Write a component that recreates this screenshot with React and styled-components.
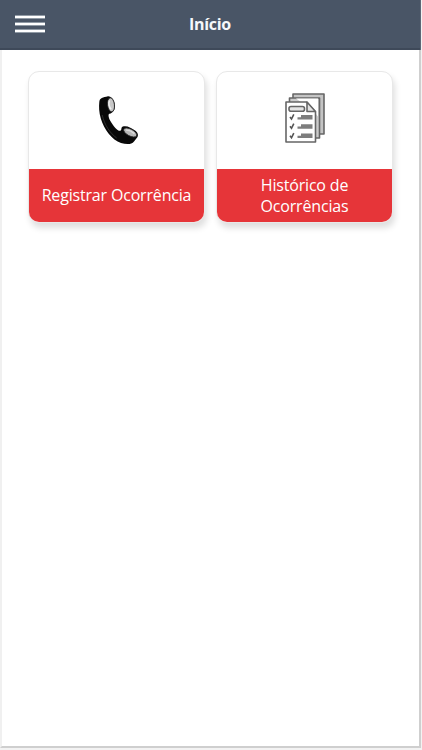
import React from 'react';
import styled, { createGlobalStyle } from 'styled-components';

const GlobalStyle = createGlobalStyle`
  * { box-sizing: border-box; }
  body {
    margin: 0;
    background: #f3f3f3;
    font-family: "Open Sans", "Noto Sans", sans-serif;
    overflow: hidden;
  }
`;

const Screen = styled.div`
  display: flex;
  flex-direction: column;
  width: 421px;
  height: 748px;
`;

const Header = styled.header`
  display: grid;
  grid-template-columns: 60px 1fr 60px;
  align-items: center;
  flex: none;
  height: 50px;
  padding-bottom: 1px;
  background: #495566;
  border-right: 1px solid #5d6877;
  box-shadow: inset 0 -2px #3e4959, 0 1px #d3dce4;
`;

const MenuButton = styled.button`
  display: flex;
  flex-direction: column;
  gap: 3px;
  width: 30px;
  margin: 0 0 2px 15px;
  padding: 0;
  border: 0;
  background: none;
`;

const MenuBar = styled.span`
  height: 4px;
  border: solid #909aa5;
  border-width: 1px 0;
  background: #fff;
`;

const Title = styled.h1`
  margin: 0 0 1px;
  color: #f5f7fa;
  font-size: 16px;
  font-weight: 700;
  line-height: 22px;
  letter-spacing: -0.3px;
  text-align: center;
`;

const Content = styled.main`
  flex: 1;
  display: grid;
  grid-template-columns: 177px 177px;
  align-content: start;
  column-gap: 11px;
  padding: 21px 0 0 26px;
  background: #fff;
  border: solid #cfcfcf;
  border-width: 0 2px 2px;
  border-left-color: #f0f0f0;
`;

const Card = styled.button`
  display: flex;
  flex-direction: column;
  height: 152px;
  padding: 0;
  border: 1px solid #e8e8e8;
  border-radius: 11px;
  background: #fff;
  box-shadow: 2px 5px 6px rgba(0, 0, 0, 0.13);
  font-family: inherit;
  overflow: hidden;
`;

const Picture = styled.span`
  display: flex;
  align-items: flex-start;
  justify-content: center;
  width: 100%;
  height: 97px;
  padding: ${({ $inset }) => $inset};
`;

const Label = styled.span`
  display: flex;
  align-items: center;
  justify-content: center;
  width: 100%;
  flex: 1;
  padding: 0 8px;
  background: #e63539;
  color: #fff;
  font-size: 16px;
  font-weight: 500;
  line-height: 21px;
  letter-spacing: -0.18px;
  text-align: center;
`;

const LabelText = styled.span`
  width: ${({ $width }) => $width};
  white-space: ${({ $wrap }) => ($wrap ? 'normal' : 'nowrap')};
`;

function PhoneIcon() {
  return (
    <svg width="56" height="62" viewBox="0 0 56 62" aria-hidden="true">
      <path d="M9.3 13C9.5 9 13 8.3 18 7.2c3-.3 6.7 3.8 6.9 9 .2 5-2 7.8-5.5 8.5-1.4.4-1 3.8 1 7.2 2.8 4.9 6.8 10 9.7 9.9 2.1-.1.4-3.1 2.7-4.2 3.2-1.5 8.6.8 13 4.5 2.2 1.8 2.6 4 1.7 5.9L44 52.5c-2.4 3-7.3 3.2-13 1.4C22 51 14 40.5 10.8 29.5 9 23.3 8.8 17.8 9.3 13z" fill="#080808" />
      <ellipse cx="21" cy="15.8" rx="3.4" ry="7" transform="rotate(-7 21 15.8)" fill="#c8c8c8" stroke="#222" strokeWidth=".8" />
      <path d="M19.4 11.5c-.9 3-.1 6.5 1.7 8.8" fill="none" stroke="#eee" strokeWidth="1.5" />
      <ellipse cx="40.2" cy="43.5" rx="7.2" ry="3.4" transform="rotate(28 40.2 43.5)" fill="#b8b8b8" stroke="#222" strokeWidth=".8" />
      <path d="M36 41.2c3-.2 6 1.3 8.3 3.6" fill="none" stroke="#ddd" strokeWidth="1.3" />
      <path d="M12.2 26c2.3 9.8 7.7 18.2 14.5 23" fill="none" stroke="#555" strokeWidth=".5" />
    </svg>
  );
}

function ChecklistIcon() {
  return (
    <svg width="56" height="64" viewBox="0 0 56 64" aria-hidden="true">
      <g stroke="#666" strokeWidth="1.6" strokeLinejoin="round">
        <path d="M17 8h31v40H17z" fill="#c4c4c4" />
        <path d="M13.5 12h30v40h-30z" fill="#ccc" />
        <path d="M20 12.5h22v18l-5-6z" fill="#fff" stroke="none" />
        <path d="M10 16h20.5l9 10v30H10z" fill="#fff" />
        <path d="M31 16v9.5h8.5z" fill="#e4e4e4" />
        <rect x="13" y="20.5" width="15.5" height="4.8" rx="2" fill="#e4e4e4" />
      </g>
      <path d="m14 31 1.5 2 2.3-4.7M14 40.3l1.5 2 2.3-4.7M14 49.8l1.5 2 2.3-4.7" fill="none" stroke="#555" strokeWidth="1.6" />
      <path d="M25 29h11.5v4.5H21.5v-2.2H25zM25 38.2h11.5v4.5H21.5v-2.2H25zM25 47.5h11.5V52H21.5v-2.2H25z" fill="#7d7d7d" />
    </svg>
  );
}

export default function App() {
  return (
    <>
      <GlobalStyle />
      <Screen>
        <Header>
          <MenuButton aria-label="Menu">
            <MenuBar />
            <MenuBar />
            <MenuBar />
          </MenuButton>
          <Title>Início</Title>
        </Header>
        <Content>
          <Card>
            <Picture $inset="17px 0 0 2px"><PhoneIcon /></Picture>
            <Label><LabelText>Registrar Ocorrência</LabelText></Label>
          </Card>
          <Card>
            <Picture $inset="14px 2px 0 0"><ChecklistIcon /></Picture>
            <Label><LabelText $wrap $width="120px">Histórico de Ocorrências</LabelText></Label>
          </Card>
        </Content>
      </Screen>
    </>
  );
}
